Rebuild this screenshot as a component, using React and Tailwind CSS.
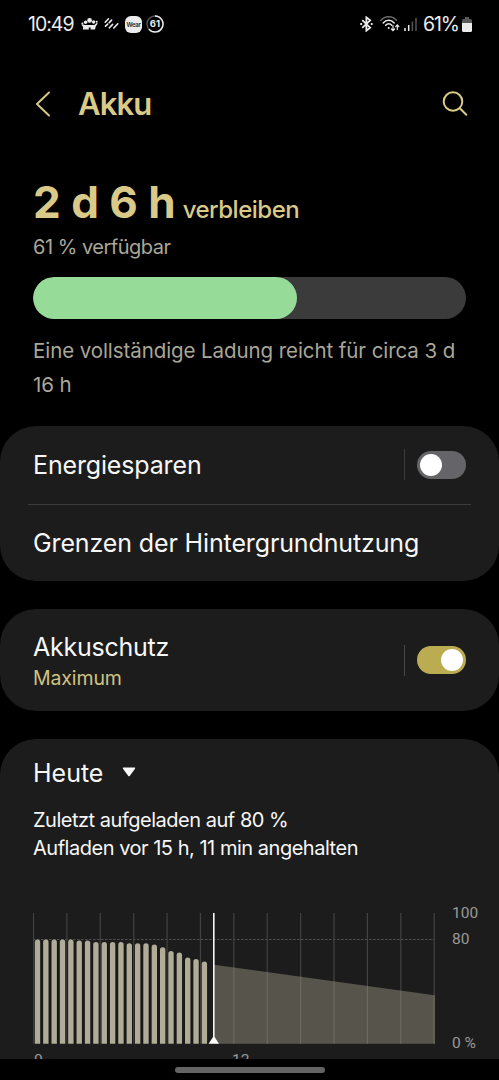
import React from "react";

const barTops = [
  26.4, 26.4, 26.4, 26.4, 26.4, 27.6, 27.6, 29, 29, 29, 29, 30.2, 30.2, 30.2,
  31.6, 34.2, 38, 39.6, 44.6, 46, 48.4,
];

function StatusBar() {
  return (
    <header className="flex h-12 shrink-0 items-center pl-7 pr-[27px] text-[#ececec]">
      <span className="w-[53px] text-[19.5px] leading-6 font-normal tracking-[-1px] whitespace-nowrap">10:49</span>
      <svg className="h-[14px] w-[17px]" viewBox="0 0 17 14" fill="currentColor">
        <circle cx="8.6" cy="3.4" r="2.4" />
        <circle cx="4.6" cy="5.2" r="1.7" />
        <circle cx="12.6" cy="5" r="1.7" />
        <circle cx="1.4" cy="6.4" r="1" />
        <circle cx="15.7" cy="4.8" r="1" />
        <path d="M1.8 12.4 2.2 10 .4 7.800l1.400-.600L3.600 8h9.800l2.200-2 1.200.600-2 2.600-.800 3.200h-4.400v-2H7.800v2z" />
      </svg>
      <svg className="ml-[6px] h-[14px] w-[15px]" viewBox="0 0 15 14" fill="none" stroke="currentColor" strokeWidth="1.6" strokeLinecap="round">
        <path d="M1.2 5.2 4.5 1.800M1.500 9.200l2.200-2.100M5.200 5.600l2.400-2.500M5.400 10.800l3.200-3.400M9.800 11l4-4.200" />
      </svg>
      <span className="ml-[6px] flex size-[17px] items-center justify-center rounded-[6px] bg-[#ececec] text-[6px] font-semibold tracking-[-0.3px] text-[#222]">Wear</span>
      <span className="relative ml-[4px] flex size-[18px] items-center justify-center text-[9.5px] font-bold">
        <svg className="absolute inset-0 size-[18px]" viewBox="0 0 18 18" fill="none" strokeWidth="1.4">
          <circle cx="9" cy="9" r="8" stroke="#555" />
          <path d="M9 1a8 8 0 1 1-6.1 13.2" stroke="#ececec" />
        </svg>
        61
      </span>

      <svg className="ml-auto h-4 w-[13px]" viewBox="0 0 13 16" fill="none" stroke="currentColor" strokeWidth="1.8">
        <path d="m2.2 4.2 8 7.4L6.4 14.600V1.400l3.800 3-8 7.400" />
        <path d="M.3 8h1.8M10.800 8h1.8" strokeWidth="2" />
      </svg>
      <svg className="ml-[7px] h-4 w-5" viewBox="0 0 20 16" fill="none" stroke="currentColor" strokeWidth="1.5" strokeLinecap="round">
        <path d="M.9 4.300C5-.6 12.400-.6 16.500 4.300" stroke="#666" />
        <path d="M3.200 6.900c3-3.600 8-3.600 11 0M5.700 9.300c1.700-2 4.400-2 6.100 0" />
        <circle cx="8.700" cy="12" r="1" fill="currentColor" stroke="none" />
        <path d="M13 9.500v5M11.400 13l1.600 1.700 1.600-1.700M17.300 13.500V9M15.700 10.600l1.600-1.700 1.600 1.700" strokeWidth="1.200" />
      </svg>
      <svg className="ml-[4px] h-[14px] w-[13px]" viewBox="0 0 13 14">
        <path d="M1 11v3M4.700 8v6" stroke="#ececec" strokeWidth="1.500" />
        <path d="M8.400 4.500V14M12 1v13" stroke="#555" strokeWidth="1.500" />
      </svg>
      <span className="ml-[6px] w-[37px] text-[19.500px] leading-6 font-normal tracking-[-1.100px] whitespace-nowrap">61%</span>
      <svg className="ml-[2px] h-[15px] w-[10px]" viewBox="0 0 10 15">
        <path d="M3 0h4v2h1.500A1.500 1.500 0 0 1 10 3.500V7H0V3.500A1.500 1.500 0 0 1 1.500 2H3z" fill="#5a5a5a" />
        <path d="M0 6h10v7.500a1.500 1.500 0 0 1-1.500 1.500h-7A1.500 1.500 0 0 1 0 13.500z" fill="#ececec" />
      </svg>
    </header>
  );
}

function Toggle({ on }) {
  return (
    <div className="flex items-center">
      <span className={on ? "h-[31px] w-px bg-[#484848]" : "h-[31px] w-px bg-[#3c3c3c]"} />
      <span
        className={
          on
            ? "ml-3 flex h-7 w-[49px] items-center justify-end rounded-full bg-[#bbab51] px-[3px]"
            : "ml-3 flex h-7 w-[49px] items-center rounded-full bg-[#646469] px-[3px]"
        }
      >
        <span className="size-[22px] rounded-full bg-white" />
      </span>
    </div>
  );
}

function UsageChart() {
  return (
    <div className="flex h-[132px]">
      <svg className="h-[132px] w-[402px]" viewBox="0 0 402 132">
        <path d="M0 26.500H401" stroke="#505050" strokeDasharray="2.500 1.500" />
        {Array.from({ length: 13 }, (_, i) => (
          <path key={i} d={`M${0.5 + i * 33.39} 0V130.700`} stroke="#424242" strokeWidth="1.200" />
        ))}
        {barTops.map((top, i) => (
          <React.Fragment key={i}>
            <rect x={0.9 + i * 8.345} y={top + 2} width="7.400" height={128.700 - top} fill="#11110f" fillOpacity="0.450" />
            <path
              d={`M${1.8 + i * 8.345} 130.700V${top + 2.7}a2.700 2.700 0 0 1 5.400 0V130.700z`}
              fill="#b0ac98"
            />
          </React.Fragment>
        ))}
        <path d="M181 51.700 401.500 82.300V130.700H181z" fill="#57544c" />
        {[6, 7, 8, 9, 10, 11, 12].map((i) => (
          <path key={i} d={`M${0.5 + i * 33.39} ${51.7 + (0.5 + i * 33.39 - 181) * 0.139}V130.700`} stroke="#6c6961" strokeWidth="1.200" />
        ))}
        <path d="M180.800 0V130" stroke="#f4f4f4" strokeWidth="1.600" />
        <path d="M175.600 130.700 179.700 124.400q1.100-1.400 2.200 0L186 130.700z" fill="#fafafa" />
      </svg>
      <div className="-mt-[10px] ml-[17px] flex h-[150px] flex-col font-[Roboto,sans-serif] text-[15.500px] leading-5 text-[#999]">
        <span>100</span>
        <span className="mt-[6px]">80</span>
        <span className="mt-auto whitespace-nowrap">0 %</span>
      </div>
    </div>
  );
}

export default function App() {
  return (
    <div className="flex h-[1080px] w-[499px] flex-col overflow-hidden bg-black font-[Inter,sans-serif] text-[#f7f7f7]">
      <StatusBar />
      <div className="flex h-[112px] shrink-0 items-center pl-[35px] pr-[31px] text-[#d9ca89]">
        <svg className="h-[26px] w-[15px]" viewBox="0 0 15 26" fill="none" stroke="currentColor" strokeWidth="1.900" strokeLinecap="round" strokeLinejoin="round">
          <path d="M14 1.500 2 13l12 11.500" />
        </svg>
        <h1 className="ml-7 text-[31px] leading-9 font-semibold tracking-[-0.900px]">Akku</h1>
        <svg className="ml-auto size-[26px]" viewBox="0 0 26 26" fill="none" stroke="currentColor" strokeWidth="2" strokeLinecap="round">
          <circle cx="11" cy="10.500" r="9.300" />
          <path d="m17.800 17.300 6.500 6.500" />
        </svg>
      </div>

      <main className="flex min-h-0 flex-1 flex-col overflow-hidden">
        <section className="flex h-[266px] shrink-0 flex-col px-[33px] pt-[16px]">
          <div className="flex items-baseline whitespace-nowrap text-[#d9ca89]">
            <span className="text-[44px] leading-[52px] font-bold">2 d 6 h</span>
            <span className="ml-[7px] text-[24px] font-medium tracking-[-0.500px]">verbleiben</span>
          </div>
          <p className="mt-[7px] text-[20px] leading-6 font-normal tracking-[-0.500px] text-[#aaa698]">61 % verfügbar</p>
          <div className="mt-[18px] h-[41.500px] shrink-0 overflow-hidden rounded-full bg-[#3b3b3b]">
            <div className="h-full w-[61%] rounded-full bg-[#97db99]" />
          </div>
          <p className="mt-[15px] text-[20.500px] leading-[34px] font-normal tracking-[-0.080px] whitespace-nowrap text-[#aaa698]">
            Eine vollständige Ladung reicht für circa 3 d<br />16 h
          </p>
        </section>

        <section className="flex h-[155px] shrink-0 flex-col rounded-[36px] bg-[#1c1c1c]">
          <div className="flex h-[78px] items-center justify-between px-[33px]">
            <span className="pt-[2px] text-[25px] tracking-[-0.150px] whitespace-nowrap">Energiesparen</span>
            <div className="-mt-px"><Toggle /></div>
          </div>
          <div className="mx-7 h-px bg-[#3c3c3c]" />
          <div className="flex h-[76px] items-center px-[33px]">
            <span className="pt-[2px] text-[25px] tracking-[-0.130px] whitespace-nowrap">Grenzen der Hintergrundnutzung</span>
          </div>
        </section>

        <section className="mt-7 flex h-[102px] shrink-0 items-center justify-between rounded-[36px] bg-[#1c1c1c] px-[33px]">
          <div className="flex flex-col pt-[2px]">
            <span className="text-[25px] leading-[34px] tracking-[-0.250px]">Akkuschutz</span>
            <span className="text-[19.500px] leading-7 font-normal tracking-[-0.120px] text-[#d0c283]">Maximum</span>
          </div>
          <Toggle on />
        </section>

        <section className="mt-7 flex h-[420px] shrink-0 flex-col rounded-t-[36px] bg-[#1c1c1c] pl-[33px] pt-[17px]">
          <div className="flex h-[34px] items-center">
            <span className="w-[71px] text-[25px] leading-[34px]">Heute</span>
            <svg className="-mt-0.5 ml-[18px] h-[10px] w-[14px]" viewBox="0 0 14 10" fill="#fafafa">
              <path d="M1.500.500h11q1.300 0 .500 1.200L7.900 8.700q-.900 1.100-1.800 0L1 1.700Q.200.500 1.500.500z" />
            </svg>
          </div>
          <p className="mt-[16px] text-[20px] leading-7 font-normal tracking-[-0.480px] whitespace-nowrap">
            Zuletzt aufgeladen auf 80 %<br />Aufladen vor 15 h, 11 min angehalten
          </p>
          <div className="mt-[51px]"><UsageChart /></div>
          <div className="mt-[5px] flex font-[Roboto,sans-serif] text-[15.500px] leading-5 text-[#999]">
            <span className="w-[199px] pl-px">0</span>
            <span>12</span>
          </div>
        </section>
      </main>

      <footer className="flex h-[21px] shrink-0 items-start justify-center bg-black pt-2">
        <span className="h-[6px] w-[150px] rounded-full bg-[#646464]" />
      </footer>
    </div>
  );
}
